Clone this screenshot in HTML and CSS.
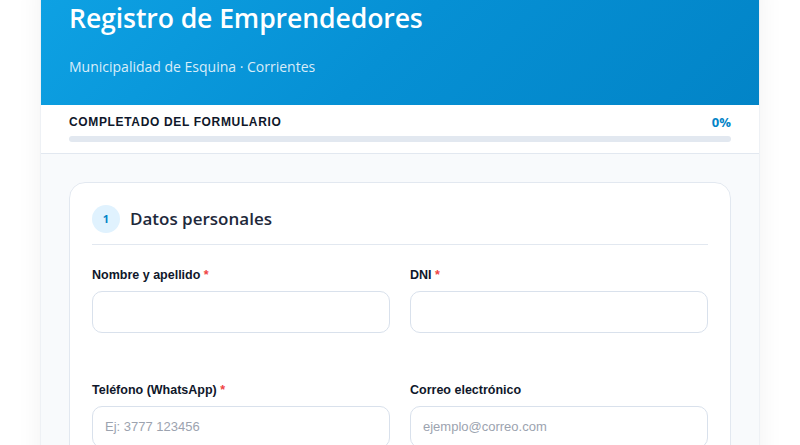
FILE: index.html
```html
<!DOCTYPE html>
<html lang="es">

<head>
  <meta charset="UTF-8" />
  <meta name="viewport" content="width=device-width, initial-scale=1" />
  <title>Registro de Emprendedores · Esquina</title>
  <link rel="stylesheet" href="styles.css">
</head>

<body>
  <main class="shell" role="main" aria-label="Registro de Emprendedores">
    <header class="hero">
      <h1>Registro de Emprendedores</h1>
      <p class="hero-sub">Municipalidad de Esquina · Corrientes</p>
    </header>

    <section class="progress" aria-label="Progreso del formulario">
      <div class="progress-head">
        <span class="progress-label">COMPLETADO DEL FORMULARIO</span>
        <span class="progress-value" id="progress-value">0%</span>
      </div>
      <div class="progress-track">
        <div class="progress-fill" id="progress-fill"></div>
      </div>
    </section>

    <form class="form-body" id="registro-form" novalidate>
      <fieldset class="step-card">
        <legend class="step-title">
          <span class="step-num">1</span>
          Datos personales
        </legend>

        <div class="field-grid">
          <div class="field">
            <label for="nombre">Nombre y apellido <span class="req">*</span></label>
            <input type="text" id="nombre" name="nombre" required aria-required="true" />
            <span class="error-message" aria-live="polite"></span>
          </div>

          <div class="field">
            <label for="dni">DNI <span class="req">*</span></label>
            <input type="text" id="dni" name="dni" inputmode="numeric" required aria-required="true" />
            <span class="error-message" aria-live="polite"></span>
          </div>

          <div class="field">
            <label for="telefono">Teléfono (WhatsApp) <span class="req">*</span></label>
            <input type="tel" id="telefono" name="telefono" placeholder="Ej: 3777 123456" required aria-required="true" />
            <span class="error-message" aria-live="polite"></span>
          </div>

          <div class="field">
            <label for="correo">Correo electrónico</label>
            <input type="email" id="correo" name="correo" placeholder="ejemplo@correo.com" />
            <span class="error-message" aria-live="polite"></span>
          </div>
        </div>
      </fieldset>
    </form>
  </main>
</body>

</html>
```

FILE: styles.css
```css
:root {
  --color-blue: #0284c7;
  --color-sky: #0ea5e9;
  --color-sky-soft: #e0f2fe;
  --color-ink: #0f172a;
  --color-heading: #1e293b;
  --color-line: #e2e8f0;
  --color-input-border: #d9e1ec;
  --color-placeholder: #9ca3af;
  --color-required: #ef4444;
  --color-bg-soft: #f8fafc;

  --font-display: 'Open Sans', 'Noto Sans', sans-serif;
  --font-ui: 'Liberation Sans', Arial, sans-serif;
}

*,
*::before,
*::after {
  box-sizing: border-box;
}

body {
  margin: 0;
  background: #ffffff;
  color: var(--color-ink);
  font-family: var(--font-ui);
  -webkit-font-smoothing: antialiased;
}

/* Page shell: header, progress and form stacked in one column */
.shell {
  max-width: 720px;
  margin: -25px auto 0;
  background: var(--color-bg-soft);
  border-left: 1px solid #eef1f5;
  border-right: 1px solid #eef1f5;
  box-shadow: 0 4px 24px rgba(15, 23, 42, 0.06);
}

.hero {
  background: linear-gradient(135deg, #0ea2e4 0%, #0690d4 50%, #0284c7 100%);
  color: #ffffff;
  padding: 28px 28px 28px;
}

.hero h1 {
  margin: 0;
  font-family: var(--font-display);
  font-weight: 600;
  font-size: 26.6px;
  line-height: 1.2;
  letter-spacing: -0.1px;
}

.hero-sub {
  margin: 21px 0 0;
  font-family: var(--font-display);
  font-size: 14px;
  line-height: 1.5;
  color: rgba(255, 255, 255, 0.85);
}

/* Progress strip */
.progress {
  background: #ffffff;
  padding: 9px 28px 11px;
  border-bottom: 1px solid var(--color-line);
}

.progress-head {
  display: flex;
  align-items: center;
  justify-content: space-between;
  line-height: 16px;
}

.progress-label {
  font-family: var(--font-ui);
  font-weight: 700;
  font-size: 12px;
  letter-spacing: 0.65px;
  color: var(--color-ink);
}

.progress-value {
  font-family: var(--font-display);
  font-weight: 700;
  font-size: 13px;
  color: var(--color-blue);
}

.progress-track {
  margin-top: 6px;
  height: 6px;
  border-radius: 999px;
  background: var(--color-line);
  overflow: hidden;
}

.progress-fill {
  width: 0;
  height: 100%;
  background: var(--color-sky);
}

/* Form body */
.form-body {
  padding: 28px 28px 40px;
}

.step-card {
  margin: 0;
  min-width: 0;
  background: #ffffff;
  border: 1px solid var(--color-line);
  border-radius: 16px;
  padding: 22px 22px 24px;
}

.step-title {
  float: left;
  width: 100%;
  display: flex;
  align-items: center;
  gap: 10px;
  padding: 0 0 11px;
  margin: 0 0 22px;
  border-bottom: 1px solid var(--color-line);
  font-family: var(--font-display);
  font-weight: 600;
  font-size: 17px;
  color: var(--color-heading);
}

.step-num {
  display: inline-flex;
  align-items: center;
  justify-content: center;
  width: 28px;
  height: 28px;
  border-radius: 50%;
  background: var(--color-sky-soft);
  color: var(--color-blue);
  font-size: 11px;
  font-weight: 700;
}

.field-grid {
  clear: both;
  display: grid;
  grid-template-columns: 1fr 1fr;
  column-gap: 20px;
  row-gap: 27px;
}

.field {
  display: flex;
  flex-direction: column;
}

.field label {
  font-family: var(--font-ui);
  font-weight: 700;
  font-size: 12.5px;
  line-height: 17px;
  margin-bottom: 7px;
  color: var(--color-ink);
}

.req {
  color: var(--color-required);
}

.field input {
  height: 42px;
  padding: 0 12px;
  border: 1.5px solid var(--color-input-border);
  border-radius: 10px;
  background: #ffffff;
  font-family: var(--font-ui);
  font-size: 13px;
  color: var(--color-ink);
  outline: none;
}

.field input::placeholder {
  color: var(--color-placeholder);
}

.field input:focus {
  border-color: var(--color-sky);
  box-shadow: 0 0 0 3px rgba(14, 165, 233, 0.15);
}

.error-message {
  min-height: 18px;
  margin-top: 4px;
  font-size: 12px;
  color: var(--color-required);
}
```
